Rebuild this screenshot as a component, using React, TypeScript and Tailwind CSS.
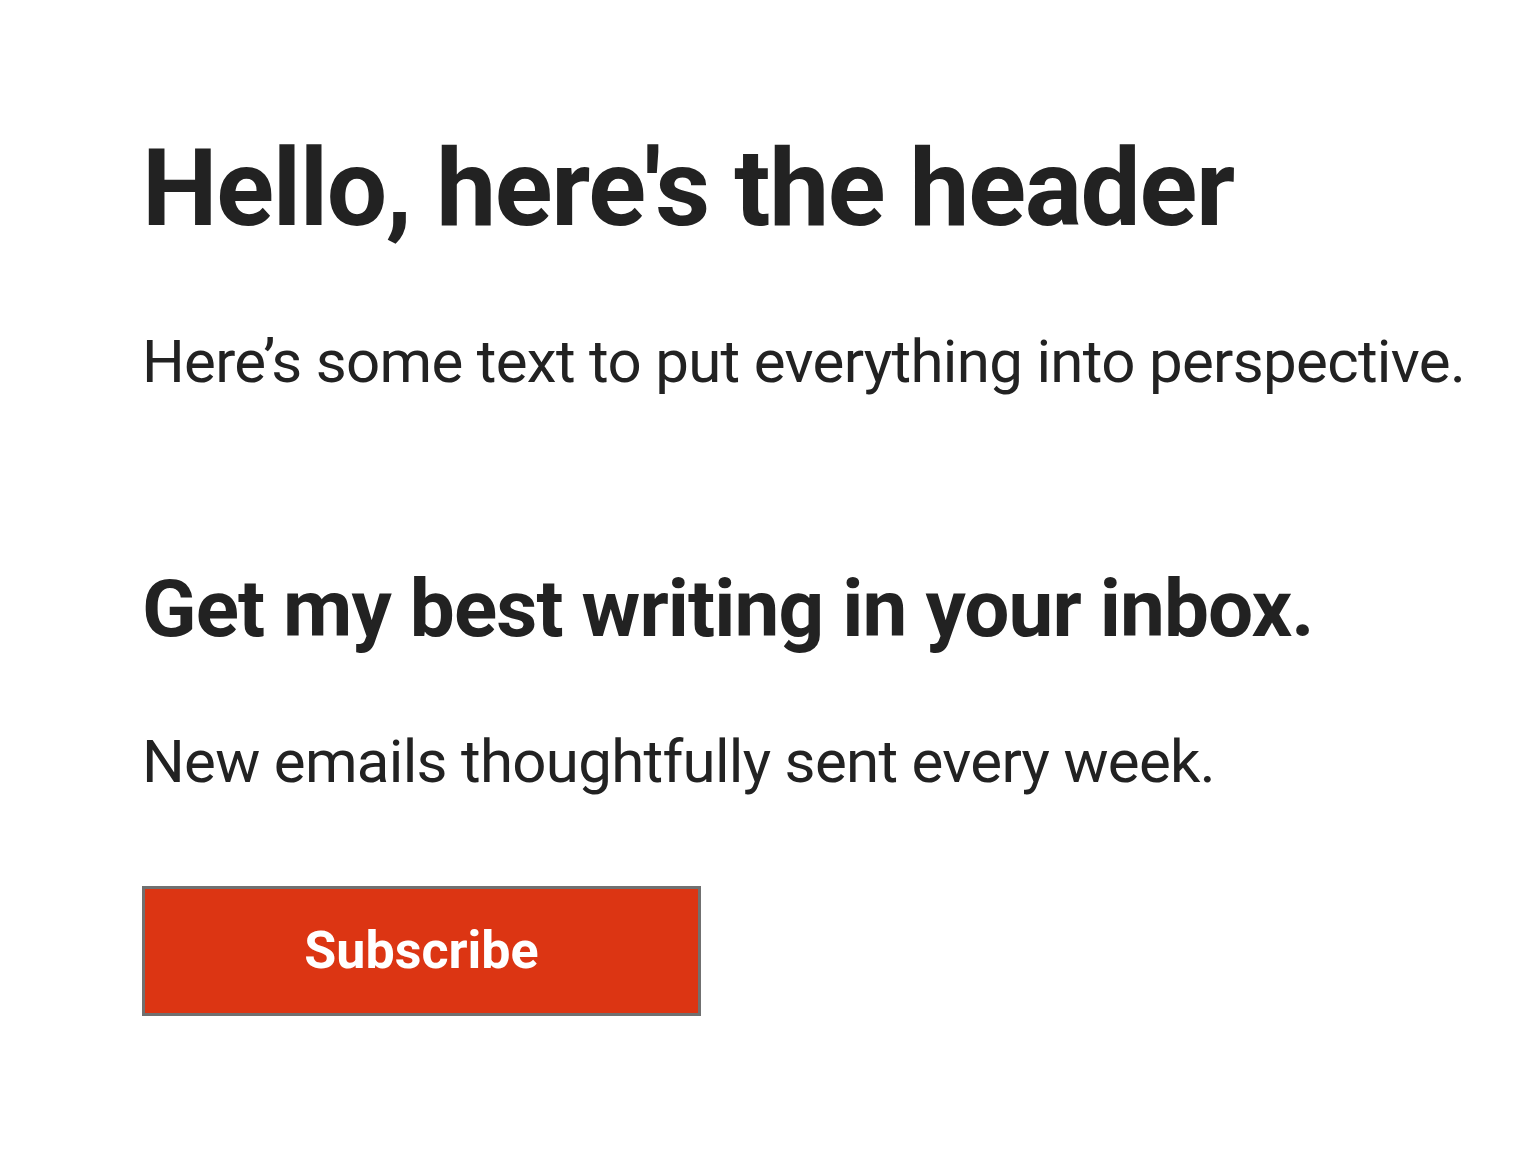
export default function App() {
  return (
    <div className="min-h-[1164px] bg-white text-[#222222]" style={{ fontFamily: 'Roboto, "Noto Sans", sans-serif' }}>
      <div className="pl-[142px] pt-[129px]">
        <h1 className="text-[107px] font-bold leading-[120px] tracking-[-1.3px]">Hello, here's the header</h1>
        <p className="mt-[77px] text-[60px] leading-[72px] tracking-[-0.68px]">Here’s some text to put everything into perspective.</p>
        <h2 className="mt-[163px] text-[80px] font-bold leading-[96px] tracking-[-0.9px]">Get my best writing in your inbox.</h2>
        <p className="mt-[69px] text-[60px] leading-[72px] tracking-[-0.7px]">New emails thoughtfully sent every week.</p>
        <button className="mt-[88px] flex h-[130px] w-[559px] items-center justify-center border-[3px] border-[#707070] bg-[#dc3513] text-[52px] font-bold text-white">
          Subscribe
        </button>
      </div>
    </div>
  );
}
